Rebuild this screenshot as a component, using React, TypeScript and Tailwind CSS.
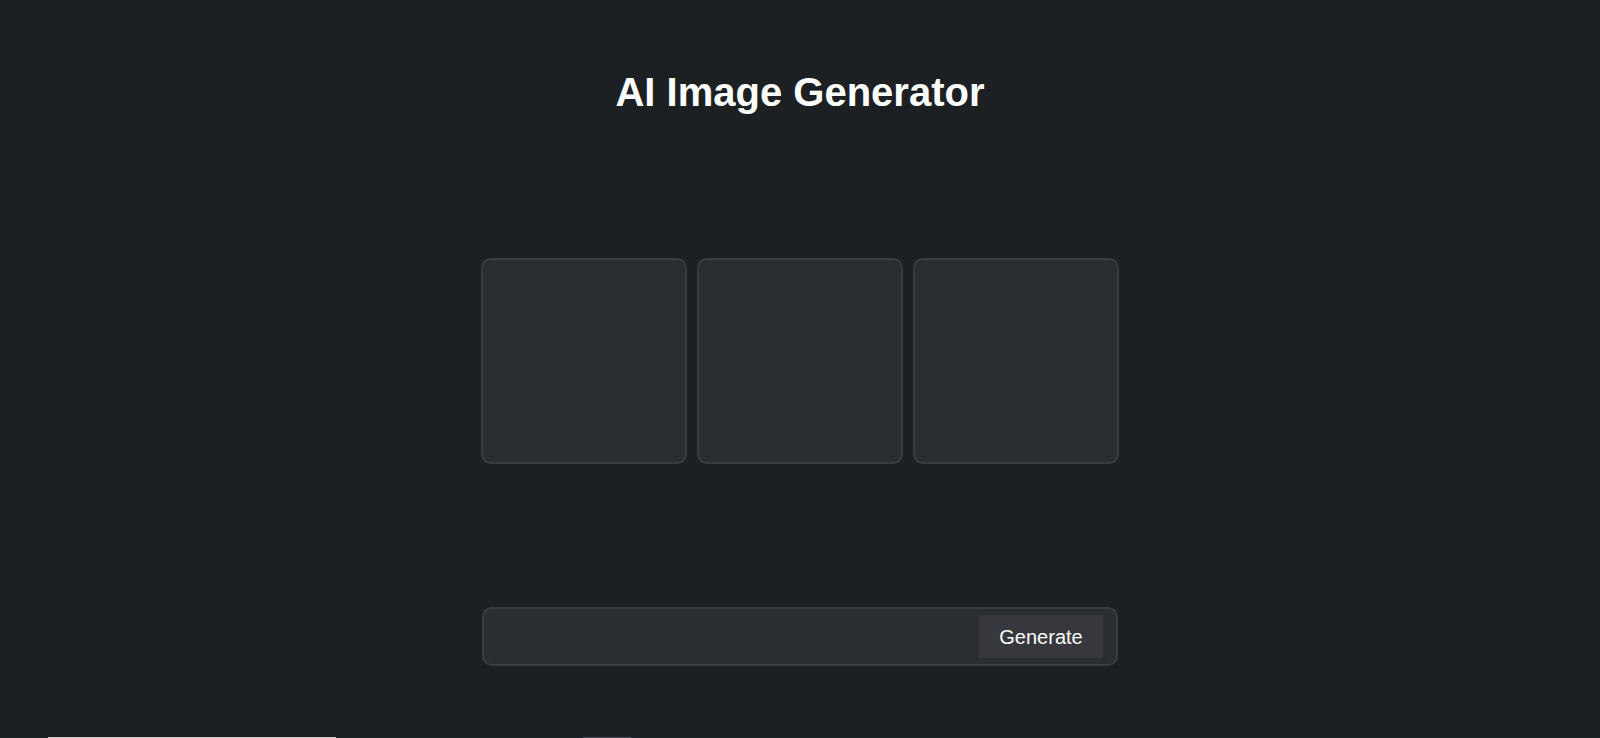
import { useState } from 'react';

const SLOTS = [0, 1, 2];

export default function App() {
  const [prompt, setPrompt] = useState('');

  return (
    <div className="h-[738px] w-full overflow-hidden bg-[#1d2023] flex flex-col font-['Liberation_Sans',Arial,sans-serif]">
      <div className="flex-1 flex flex-col items-center">
        <h1 className="mt-[69px] text-[40px] leading-[46px] font-bold text-white">AI Image Generator</h1>

        <div className="mt-[143px] w-[638px] grid grid-cols-3 gap-[10px]">
          {SLOTS.map(i => (
            <div key={i} className="h-[206px] rounded-[10px] border-2 border-[#393c41] bg-[#2a2d32]" />
          ))}
        </div>

        <div className="mt-[143px] w-[636px] h-[59px] flex items-center rounded-[10px] border-2 border-[#393c41] bg-[#2a2d32] py-[6px] pr-[13px]">
          <input
            value={prompt}
            onChange={e => setPrompt(e.target.value)}
            className="flex-1 h-full bg-transparent px-3 text-white outline-none text-[18px]"
          />
          <button className="h-[43px] w-[124px] bg-[#37383d] text-white text-[20px]">Generate</button>
        </div>
      </div>

      <div className="h-px flex bg-[#1f2a2d]">
        <div className="w-[48px]" />
        <div className="w-[288px] bg-[#c8c8c8]" />
        <div className="w-[247px]" />
        <div className="w-[48px] bg-[#4b5157]" />
      </div>
    </div>
  );
}
